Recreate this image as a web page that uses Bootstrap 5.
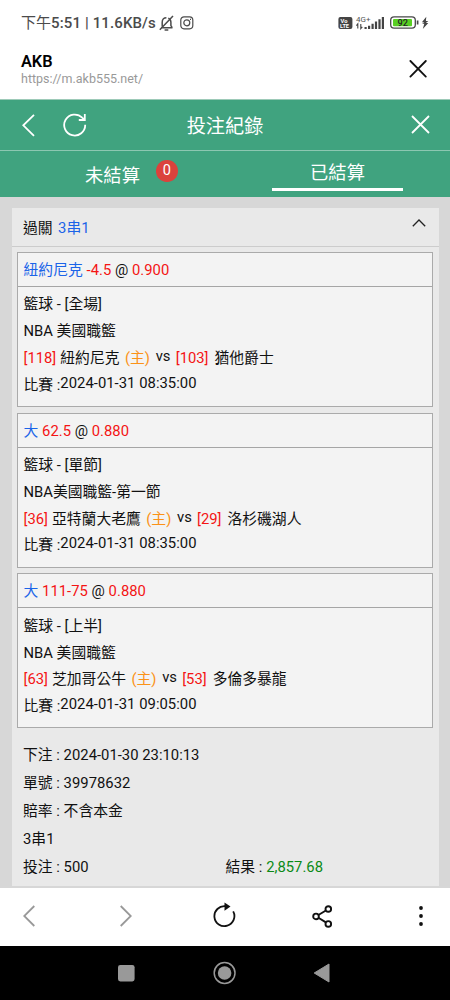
<!DOCTYPE html>
<html lang="zh-Hant">
<head>
<meta charset="utf-8">
<meta name="viewport" content="width=device-width, initial-scale=1">
<title>投注紀錄</title>
<link href="https://cdn.jsdelivr.net/npm/bootstrap@5.3.0/dist/css/bootstrap.min.css" rel="stylesheet">
<script src="https://cdn.jsdelivr.net/npm/bootstrap@5.3.0/dist/js/bootstrap.bundle.min.js" defer></script>
<style>
body{font-family:Roboto,"Noto Sans CJK TC",sans-serif;font-size:14.8px;line-height:20px;color:#111;background:#fff;height:1000px;overflow:hidden}
svg{display:block;flex:none}
.status{height:44px;padding:1px 20px 0 21px;color:#4b4b4b;font-size:15px}
.clock-figures{font-weight:500;letter-spacing:.13px}
.site{height:55px;padding:8px 23px 0 21px}
.site-name{font-size:16.3px;line-height:19px;font-weight:600;color:#000}
.site-url{font-size:12.5px;line-height:16px;color:#999}
.green{background:#40a37f;color:#fff}
.titlebar{height:52px;border-top:1px solid #9dcab8;border-bottom:1px solid #8cc7b1;font-size:19.2px}
.title-text{padding-top:3px}
.tabs{height:46px;font-size:18.3px;line-height:26px}
.tab-underline{width:131px;height:3px;background:#fff}
.count{width:21.5px;height:21.5px;background:#db423c;font-size:14.5px;line-height:21.5px;left:156px;top:9px}
.page{background:#d7d7d7;height:691px;padding:11px 11px 2px 12px}
.panel{background:#e9e9e9;height:678px}
.panel-top{height:39px;padding:2px 13px 0 11px;border-bottom:1px solid #ccc}
.bet{background:#f3f3f3;border:1px solid #aaa;height:155px;margin:0 6px 5.7px 5px}
.bet-odds{height:34px;border-bottom:1px solid #a5a5a5;padding:1px 5.5px 0;letter-spacing:.03px}
.bet-body{padding:4px 5.5px 0}
.line{height:26.8px;white-space:pre}
.team-home{margin-left:4px}
.host{margin-left:5.5px}
.versus{margin:0 5.2px 0 5.7px}
.team-away{margin-left:6px}
.raised{position:relative;top:-2px}
.when{letter-spacing:.04px}
.blue{color:#1b64e8}.red{color:#f41414}.orange{color:#fb9217}.green-text{color:#0b8a16}
.sum{padding:6.5px 11px 0;letter-spacing:.02px}
.sum>div{height:28px}
.toolbar{height:58px;padding:0 0 2px 23px}
.sysbar{height:54px;background:#000}
.slot{width:98px}
</style>
</head>
<body class="d-flex flex-column">
<div class="status d-flex align-items-center flex-shrink-0">
  <span class="text-nowrap">下午<span class="clock-figures">5:51 | 11.6KB/s</span></span>
  <svg style="margin-left:3px" width="15" height="16" viewBox="0 0 15 16" fill="none" stroke="#4b4b4b" stroke-width="1.5"><path d="M2 12.8h11.5M3.2 11.5V7.2C3.2 4 5 2.8 7.4 2.8M9.3 3.1c2 .8 2.6 2.1 2.6 4.1v3.4l1.3 2M.8 14.8 14 1M5.6 14.9h3.7"/></svg>
  <svg style="margin-left:6.5px" width="14" height="14" viewBox="0 0 14 14" fill="none" stroke="#4b4b4b" stroke-width="1.2"><rect x=".8" y=".8" width="12" height="12" rx="3.2"/><circle cx="6.8" cy="6.8" r="3"/><path d="M10 3.4h1" stroke-width="1.4"/></svg>
  <svg class="ms-auto" width="92" height="16" viewBox="338 14 92 16" font-family="Roboto,sans-serif">
    <rect x="338.4" y="16" width="14" height="12" rx="2" fill="#444"/>
    <text x="340.6" y="21.7" font-size="5.8" font-weight="700" fill="#fff">Vo</text><text x="340" y="27" font-size="5.6" font-weight="700" fill="#fff">LTE</text>
    <text x="356" y="20.8" font-size="8" fill="#555">4G+</text>
    <path d="M357.8 27.5v-4.6l-1.4 1.7M360.8 23v4.5l1.5-1.7" stroke="#444" stroke-width="1.1" fill="none"/>
    <path d="M365.6 28v-2M369.1 28v-3.3M372.6 28v-5.3M376 28v-7.6M379.5 28v-9.8M382.9 28V16" stroke="#444" stroke-width="2.2" fill="none"/>
    <rect x="390.7" y="15.8" width="24.6" height="11.4" rx="3.4" fill="#fff" stroke="#484848" stroke-width="1.3"/>
    <rect x="393" y="18" width="19" height="7.2" rx="1" fill="#58cf22"/><path d="M417.6 19.5v4" stroke="#484848" stroke-width="1.7"/>
    <text x="397.5" y="25" font-size="9.2" font-weight="500" fill="#252525">92</text>
    <path d="m426.3 15.8-4.4 5.5h2.4l-2.2 1.5h2.2l-1.5 5.2 5.5-6h-2.4l2.4-2h-2.4z" fill="#444"/>
  </svg>
</div>
<header class="site d-flex justify-content-between flex-shrink-0">
  <div><div class="site-name">AKB</div><div class="site-url">https://m.akb555.net/</div></div>
  <svg style="margin-top:8px" width="18" height="18" viewBox="0 0 18 18" stroke="#111" stroke-width="1.8" stroke-linecap="round"><path d="m1.4 1 15.4 15.6M16.8 1 1.4 16.6"/></svg>
</header>
<div class="titlebar green position-relative d-flex align-items-center flex-shrink-0">
  <svg style="margin-left:22px" width="13" height="23" viewBox="0 0 13 23" fill="none" stroke="#fff" stroke-width="1.8"><path d="M12 .9 1.3 11.3 12 21.8"/></svg>
  <svg style="margin-left:28px" width="24" height="24" viewBox="0 0 24 24" fill="none" stroke="#fff" stroke-width="1.8"><path d="M22.2 11.8A10.5 10.5 0 1 1 19.2 4.7L21.3 6.7M21.8 1v6h-6"/></svg>
  <span class="title-text position-absolute start-50 translate-middle-x">投注紀錄</span>
  <svg class="ms-auto" style="margin:-1px 20px 0 0" width="19" height="19" viewBox="0 0 19 19" stroke="#fff" stroke-width="1.8"><path d="m1 1 17 17M18 1 1 18"/></svg>
</div>
<div class="tabs green d-flex flex-shrink-0">
  <div class="w-50 text-center position-relative" style="padding-top:12px">未結算<span class="count rounded-circle position-absolute">0</span></div>
  <div class="w-50 text-center" style="padding-top:9px"><div>已結算</div><div class="tab-underline mx-auto" style="margin-top:1.5px"></div></div>
</div>
<main class="page flex-shrink-0">
  <section class="panel">
    <div class="panel-top d-flex align-items-center"><span>過關</span><span class="blue" style="margin-left:5.5px">3串1</span>
      <svg class="ms-auto" style="margin-top:-10px" width="14" height="8" viewBox="0 0 14 8" fill="none" stroke="#222" stroke-width="1.3"><path d="M.8 7.2 7 1l6.2 6.2"/></svg></div>
    <article class="bet" style="margin-top:5px">
      <div class="bet-odds d-flex align-items-center"><span class="text-nowrap"><span class="blue">紐約尼克</span> <span class="red">-4.5</span> @ <span class="red">0.900</span></span></div>
      <div class="bet-body">
        <div class="line d-flex align-items-center">籃球 - [全場]</div><div class="line d-flex align-items-center">NBA 美國職籃</div>
        <div class="line d-flex align-items-center"><span class="red">[118]</span><span class="team-home">紐約尼克</span><span class="orange host">(主)</span><span class="raised versus">vs</span><span class="red">[103]</span><span class="team-away">猶他爵士</span></div>
        <div class="line d-flex align-items-center"><span>比賽 :</span><span class="raised when">2024-01-31 08:35:00</span></div>
      </div>
    </article>
    <article class="bet">
      <div class="bet-odds d-flex align-items-center"><span class="text-nowrap"><span class="blue">大</span> <span class="red">62.5</span> @ <span class="red">0.880</span></span></div>
      <div class="bet-body">
        <div class="line d-flex align-items-center">籃球 - [單節]</div><div class="line d-flex align-items-center">NBA美國職籃-第一節</div>
        <div class="line d-flex align-items-center"><span class="red">[36]</span><span class="team-home">亞特蘭大老鷹</span><span class="orange host">(主)</span><span class="raised versus">vs</span><span class="red">[29]</span><span class="team-away">洛杉磯湖人</span></div>
        <div class="line d-flex align-items-center"><span>比賽 :</span><span class="raised when">2024-01-31 08:35:00</span></div>
      </div>
    </article>
    <article class="bet">
      <div class="bet-odds d-flex align-items-center"><span class="text-nowrap"><span class="blue">大</span> <span class="red">111-75</span> @ <span class="red">0.880</span></span></div>
      <div class="bet-body">
        <div class="line d-flex align-items-center">籃球 - [上半]</div><div class="line d-flex align-items-center">NBA 美國職籃</div>
        <div class="line d-flex align-items-center"><span class="red">[63]</span><span class="team-home">芝加哥公牛</span><span class="orange host">(主)</span><span class="raised versus">vs</span><span class="red">[53]</span><span class="team-away">多倫多暴龍</span></div>
        <div class="line d-flex align-items-center"><span>比賽 :</span><span class="raised when">2024-01-31 09:05:00</span></div>
      </div>
    </article>
    <div class="sum">
      <div class="d-flex align-items-center">下注 : 2024-01-30 23:10:13</div>
      <div class="d-flex align-items-center">單號 : 39978632</div>
      <div class="d-flex align-items-center">賠率 : 不含本金</div>
      <div class="d-flex align-items-center">3串1</div>
      <div class="d-flex align-items-center"><span class="w-50">投注 : 500</span><span>結果 : <span class="green-text">2,857.68</span></span></div>
    </div>
  </section>
</main>
<nav class="toolbar bg-white d-flex align-items-center flex-shrink-0">
  <span class="slot"><svg width="12" height="22" viewBox="0 0 12 22" fill="none" stroke="#999" stroke-width="1.8"><path d="M11.3 1 1.2 11l10.1 10"/></svg></span>
  <span style="width:92px"><svg style="margin-left:-1px" width="12" height="22" viewBox="0 0 12 22" fill="none" stroke="#999" stroke-width="1.8"><path d="M.7 1 10.8 11 .7 21"/></svg></span>
  <span class="slot"><svg style="margin-top:-2px" width="24" height="26" viewBox="0 0 24 26" fill="none" stroke="#111" stroke-width="1.8"><path d="M12.5 4.2A10 10 0 1 0 20.2 9.4"/><path d="m11.5.4 6 4.2-6 4.2z" fill="#111" stroke="none"/></svg></span>
  <span style="width:107px"><svg style="margin-left:1px" width="21" height="23" viewBox="0 0 21 23" fill="none" stroke="#111" stroke-width="1.9"><circle cx="4" cy="11.4" r="2.8"/><circle cx="16.3" cy="4" r="2.8"/><circle cx="16.3" cy="18.9" r="2.8"/><path d="m6.4 10 7.5-4.5M6.4 12.8l7.5 4.6"/></svg></span>
  <svg width="6" height="22" viewBox="0 0 6 22" fill="#111"><circle cx="3" cy="3" r="1.9"/><circle cx="3" cy="11" r="1.9"/><circle cx="3" cy="19" r="1.9"/></svg>
</nav>
<footer class="sysbar d-flex align-items-center flex-shrink-0" style="padding-left:118px">
  <svg width="17" height="17" viewBox="0 0 17 17"><rect width="16.6" height="16.4" rx="2.3" fill="#999"/></svg>
  <svg style="margin-left:78px" width="24" height="24" viewBox="0 0 24 24"><circle cx="11.6" cy="12" r="10.4" fill="none" stroke="#999" stroke-width="1.5"/><circle cx="11.6" cy="12" r="6.8" fill="#999"/></svg>
  <svg style="margin-left:76px" width="17" height="20" viewBox="0 0 17 20"><path d="M16 1v18L1.2 10z" fill="#999" stroke="#999" stroke-linejoin="round"/></svg>
</footer>
</body>
</html>
